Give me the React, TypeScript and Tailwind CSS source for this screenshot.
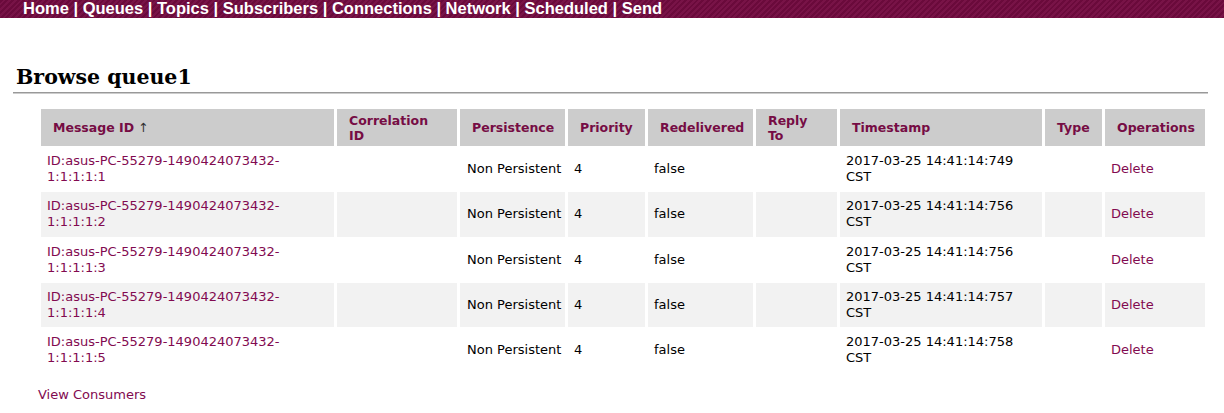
const rows = [1, 2, 3, 4, 5].map((n) => ({
  id: `ID:asus-PC-55279-1490424073432-1:1:1:1:${n}`,
  stamp: ["749", "756", "756", "757", "758"][n - 1],
}));

const navItems = ["Home", "Queues", "Topics", "Subscribers", "Connections", "Network", "Scheduled", "Send"];

const columns = [
  { label: ["Message ID"], w: "w-[293px]", arrow: true },
  { label: ["Correlation", "ID"], w: "w-[120px]" },
  { label: ["Persistence"], w: "w-[105px]" },
  { label: ["Priority"], w: "w-[77px]" },
  { label: ["Redelivered"], w: "w-[105px]" },
  { label: ["Reply", "To"], w: "w-[81px]" },
  { label: ["Timestamp"], w: "w-[202px]" },
  { label: ["Type"], w: "w-[57px]" },
  { label: ["Operations"], w: "w-[100px]" },
];

export default function App() {
  return (
    <div className="min-h-[413px] bg-white font-['DejaVu_Sans',Verdana,sans-serif] text-[13px] text-black">
      {/* Top nav */}
      <div className="h-[18px] overflow-hidden whitespace-nowrap bg-[repeating-linear-gradient(-45deg,#6a0a3b_0px,#6a0a3b_2px,#781347_2px,#781347_4px)] pl-[23px] font-['Liberation_Sans',Arial,sans-serif] text-[16.5px] font-bold leading-[16px] text-white">
        {navItems.map((item, i) => (
          <span key={item}>
            {i > 0 && <span> | </span>}
            <a className="cursor-pointer">{item}</a>
          </span>
        ))}
      </div>

      <div className="pl-[13px] pr-[16px]">
        <h2 className="mt-[46px] pl-[3px] font-['DejaVu_Serif',Georgia,serif] text-[20.5px] font-bold leading-[26px]">
          Browse queue1
        </h2>
        <div className="mt-[2px] h-[2px] border-t border-[#999] bg-[#ccc]" />

        <div className="pl-[25px]">
          <table className="mt-[14px] w-[1170px] table-fixed border-separate border-spacing-x-[3px] border-spacing-y-[1px]">
            <colgroup>
              {columns.map((c) => (
                <col key={c.label[0]} className={c.w} />
              ))}
            </colgroup>
            <thead>
              <tr>
                {columns.map((c) => (
                  <th
                    key={c.label[0]}
                    className="h-[37px] whitespace-nowrap bg-[#cccccc] pl-[12px] pr-[4px] text-left align-middle text-[12.5px] font-bold leading-[15px] text-[#760c44]"
                  >
                    {c.label[0]}
                    {c.label[1] && (
                      <>
                        <br />
                        {c.label[1]}
                      </>
                    )}
                    {c.arrow && <span className="font-normal text-[#333]"> ↑</span>}
                  </th>
                ))}
              </tr>
            </thead>
            <tbody>
              {rows.map((r, i) => {
                const bg = i % 2 === 1 ? "bg-[#f2f2f2]" : "bg-white";
                const td = `${bg} h-[44.3px] px-[6px] align-middle leading-[16px] whitespace-nowrap`;
                return (
                  <tr key={r.id}>
                    <td className={td}>
                      <a className="cursor-pointer text-[#820a50]">
                        ID:asus-PC-55279-1490424073432-
                        <br />
                        {r.id.slice(31)}
                      </a>
                    </td>
                    <td className={td}></td>
                    <td className={`${td} pl-[7px] pr-0`}>Non Persistent</td>
                    <td className={td}>4</td>
                    <td className={td}>false</td>
                    <td className={td}></td>
                    <td className={td}>
                      2017-03-25 14:41:14:{r.stamp}
                      <br />
                      CST
                    </td>
                    <td className={td}></td>
                    <td className={td}>
                      <a className="cursor-pointer text-[#820a50]">Delete</a>
                    </td>
                  </tr>
                );
              })}
            </tbody>
          </table>

          <div className="mt-[12px]">
            <a className="cursor-pointer text-[#820a50]">View Consumers</a>
          </div>
        </div>
      </div>
    </div>
  );
}
